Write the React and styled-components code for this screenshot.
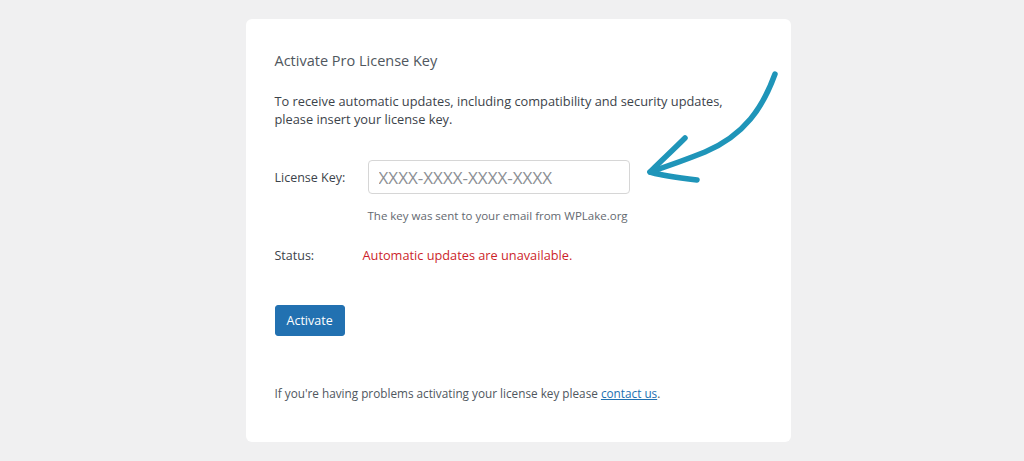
import React from "react";
import styled, { createGlobalStyle } from "styled-components";

const GlobalStyle = createGlobalStyle`
  html, body {
    margin: 0;
    padding: 0;
    background: #f0f0f1;
  }
  body {
    font-family: "Open Sans", "Noto Sans", sans-serif;
    color: #3c434a;
  }
`;

const Page = styled.div`
  width: 1024px;
  height: 461px;
  display: flex;
  justify-content: center;
  padding: 19px 0 0 12px;
  box-sizing: border-box;
`;

const Card = styled.div`
  position: relative;
  width: 545px;
  height: 423px;
  box-sizing: border-box;
  background: #fff;
  border-radius: 6px;
  padding: 31px 29px 0;
`;

const Title = styled.h2`
  margin: 0;
  font-size: 14.5px;
  font-weight: 400;
  line-height: 22px;
  color: #50575e;
`;

const Intro = styled.p`
  margin: 20px 0 0;
  font-size: 12.8px;
  line-height: 18px;
  color: #3c434a;
`;

const Row = styled.div`
  display: grid;
  grid-template-columns: 93px 1fr;
  align-items: center;
  margin-top: ${(p) => p.$top}px;
`;

const Label = styled.span`
  font-size: 12.5px;
  color: #3c434a;
`;

const Input = styled.input`
  width: 262px;
  height: 34px;
  box-sizing: border-box;
  border: 1px solid #d6d6d6;
  border-radius: 4px;
  padding: 0 10px;
  font-family: inherit;
  font-size: 17px;
  color: #3c434a;
  outline: none;
  &::placeholder {
    color: #8c8f94;
  }
`;

const Hint = styled.div`
  margin: 14px 0 0 93px;
  font-size: 11.5px;
  color: #646970;
`;

const StatusText = styled.span`
  margin-left: -5px;
  font-size: 12.75px;
  color: #cc1f2b;
`;

const Button = styled.button`
  margin-top: 41px;
  height: 31px;
  padding: 0 11px;
  border: 1px solid #2271b1;
  border-radius: 3px;
  background: #2271b1;
  color: #fff;
  font-family: inherit;
  font-size: 12.5px;
  cursor: pointer;
`;

const Footer = styled.p`
  margin: 49px 0 0;
  font-size: 11.75px;
  color: #50575e;
  a {
    color: #2271b1;
    text-decoration: underline;
  }
`;

const Arrow = styled.svg`
  position: absolute;
  left: 399px;
  top: 28px;
  width: 140px;
  height: 145px;
  pointer-events: none;
`;

export default function App() {
  return (
    <>
      <GlobalStyle />
      <Page>
        <Card>
          <Title>Activate Pro License Key</Title>
          <Intro>
            To receive automatic updates, including compatibility and security updates,
            <br />
            please insert your license key.
          </Intro>
          <Row $top={32}>
            <Label>License Key:</Label>
            <Input placeholder="XXXX-XXXX-XXXX-XXXX" />
          </Row>
          <Hint>The key was sent to your email from WPLake.org</Hint>
          <Row $top={23}>
            <Label>Status:</Label>
            <StatusText>Automatic updates are unavailable.</StatusText>
          </Row>
          <Button>Activate</Button>
          <Footer>
            If you're having problems activating your license key please{" "}
            <a href="#">contact us</a>.
          </Footer>
          <Arrow viewBox="0 0 140 145">
            <g
              fill="none"
              stroke="#1f95b9"
              strokeWidth="5.5"
              strokeLinecap="round"
              strokeLinejoin="round"
            >
              <path d="M130 27 C 118 60, 100 88, 60 105 C 40 113, 20 120, 5 125" />
              <path d="M40 91 C 28 103, 15 115, 5 125 C 18 129, 35 131, 52 133" />
            </g>
          </Arrow>
        </Card>
      </Page>
    </>
  );
}
